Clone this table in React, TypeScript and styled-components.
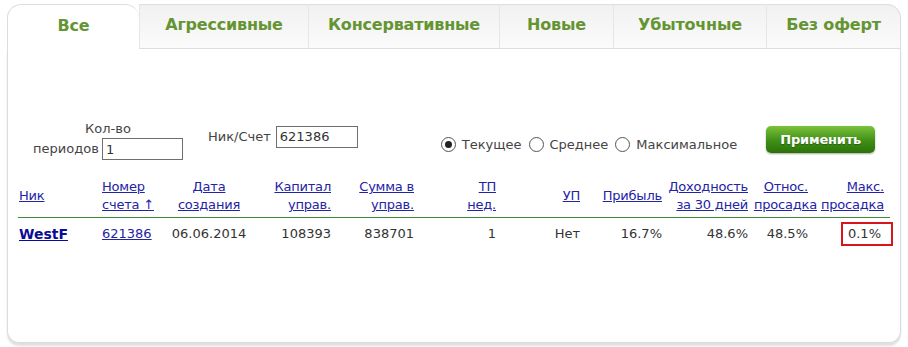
import React from 'react'
import styled, { createGlobalStyle } from 'styled-components'

const GlobalStyle = createGlobalStyle`
  body {
    margin: 0;
    background: #fff;
    font-family: "DejaVu Sans", Verdana, sans-serif;
    font-size: 13px;
    color: #444;
  }
`

const tabs = [
  { title: 'Все', width: 132 },
  { title: 'Агрессивные', width: 169 },
  { title: 'Консервативные', width: 191 },
  { title: 'Новые', width: 114 },
  { title: 'Убыточные', width: 153 },
  { title: 'Без оферт', width: 135 },
]

interface Column {
  key: string,
  title: React.ReactNode,
  width: number,
  align: 'left' | 'center' | 'right'
}

const columns: Column[] = [
  { key: 'nick', title: 'Ник', width: 81, align: 'left' },
  { key: 'account', title: <>Номер<br />счета ↑</>, width: 69, align: 'left' },
  { key: 'created', title: <>Дата<br />создания</>, width: 82, align: 'center' },
  { key: 'capital', title: <>Капитал<br />управ.</>, width: 84, align: 'right' },
  { key: 'sum', title: <>Сумма в<br />управ.</>, width: 83, align: 'right' },
  { key: 'tp', title: <>ТП<br />нед.</>, width: 82, align: 'right' },
  { key: 'up', title: 'УП', width: 84, align: 'right' },
  { key: 'profit', title: 'Прибыль', width: 82, align: 'right' },
  { key: 'yield', title: <>Доходность<br />за 30 дней</>, width: 86, align: 'right' },
  { key: 'rel', title: <>Относ.<br />просадка</>, width: 60, align: 'right' },
  { key: 'max', title: <>Макс.<br />просадка</>, width: 79, align: 'right' },
]

const Page = styled.div`
  padding: 4px 7px 5px 7px;
`

const TabBar = styled.div`
  display: flex;
  height: 45px;
`

const Tab = styled.div<{ $active?: boolean, $last?: boolean }>`
  box-sizing: border-box;
  display: flex;
  align-items: center;
  justify-content: center;
  padding-bottom: 4px;
  font-weight: bold;
  font-size: 16px;
  letter-spacing: -0.2px;
  color: #659433;
  border-top: 1px solid #dedede;
  border-left: 1px solid ${props => props.$active ? '#dcdcdc' : '#e6e6e6'};
  border-right: ${props => props.$last ? '1px solid #dcdcdc' : 'none'};
  border-bottom: ${props => props.$active ? 'none' : '1px solid #dedede'};
  border-radius: ${props => props.$active ? '14px 14px 0 0' : props.$last ? '0 14px 0 0' : '0'};
  background: ${props => props.$active ? '#fff' : 'linear-gradient(#f1f1f1, #fbfbfb)'};
`

const Panel = styled.div`
  height: 294px;
  background: #fff;
  border: 1px solid #dcdcdc;
  border-top: none;
  border-radius: 0 0 12px 12px;
  box-shadow: 0 3px 2px rgba(0, 0, 0, 0.12);
  padding: 71px 0 0 11px;
  box-sizing: border-box;
`

const Filters = styled.div`
  display: flex;
  align-items: center;
  height: 40px;
`

const PeriodField = styled.div`
  width: 150px;
  text-align: center;
  line-height: 18px;
  margin-left: 14px;
`

const TextInput = styled.input<{ $width: number }>`
  width: ${props => props.$width}px;
  height: 22px;
  box-sizing: border-box;
  border: 1px solid #6f6f6f;
  padding: 1px 3px;
  font-family: "DejaVu Sans", Verdana, sans-serif;
  font-size: 13px;
  color: #333;
  vertical-align: middle;
  margin-left: 3px;
`

const NickField = styled.div`
  margin-left: 25px;
  margin-top: -7px;
  display: flex;
  align-items: center;
  & > input { margin-left: 5px; }
`

const RadioGroup = styled.div`
  display: flex;
  align-items: center;
  margin-left: 83px;
  margin-top: 8px;
`

const RadioLabel = styled.label`
  display: flex;
  align-items: center;
  margin-right: 7px;
  color: #444;
`

const Radio = styled.span<{ $checked?: boolean }>`
  width: 15px;
  height: 15px;
  border: 1px solid #555;
  border-radius: 50%;
  box-sizing: border-box;
  margin-right: 6px;
  display: flex;
  align-items: center;
  justify-content: center;
  background: #fff;
  &::after {
    content: '';
    display: ${props => props.$checked ? 'block' : 'none'};
    width: 7px;
    height: 7px;
    border-radius: 50%;
    background: #222;
  }
`

const ApplyButton = styled.button`
  margin-left: 22px;
  margin-top: -2px;
  width: 109px;
  height: 27px;
  border: none;
  border-radius: 5px;
  background: linear-gradient(#7cc23a, #3f8f17 55%, #2c7209);
  box-shadow: 0 1px 2px rgba(0, 0, 0, 0.35);
  color: #fff;
  font-family: "DejaVu Sans", Verdana, sans-serif;
  font-weight: bold;
  font-size: 13px;
  letter-spacing: -0.2px;
  text-shadow: 0 1px 1px rgba(0, 0, 0, 0.3);
`

const Table = styled.table`
  margin-top: 17px;
  margin-left: -1px;
  border-collapse: collapse;
  table-layout: fixed;
  width: 872px;
`

const HeadCell = styled.th<{ $align: string }>`
  font-weight: normal;
  text-align: ${props => props.$align};
  vertical-align: middle;
  line-height: 18px;
  padding: 1px 3px 3px 3px;
  border-bottom: 1px solid #3f8a3a;
  letter-spacing: -0.2px;
  &:first-child { padding-left: 1px; }
  &:last-child { padding-right: 6px; }
`

const HeadLink = styled.a`
  color: #2323a6;
  text-decoration: underline;
`

const Cell = styled.td<{ $align: string }>`
  text-align: ${props => props.$align};
  line-height: 18px;
  padding: 4px 3px;
  color: #333;
  &:first-child { padding-left: 1px; }
  &:last-child { padding-right: 6px; }
`

const NickLink = styled.a`
  color: #0b0b96;
  font-weight: bold;
  font-size: 14px;
  text-decoration: underline;
`

const AccountLink = styled.a`
  color: #2323a6;
  text-decoration: underline;
`

const Highlight = styled.span`
  display: inline-block;
  border: 2px solid #d9141b;
  padding: 1px 10px 1px 5px;
  margin-right: -9px;
`

export default function App () {
  const row: Record<string, React.ReactNode> = {
    nick: <NickLink href="#">WestF</NickLink>,
    account: <AccountLink href="#">621386</AccountLink>,
    created: '06.06.2014',
    capital: '108393',
    sum: '838701',
    tp: '1',
    up: 'Нет',
    profit: '16.7%',
    yield: '48.6%',
    rel: '48.5%',
    max: <Highlight>0.1%</Highlight>,
  }

  return (
    <Page>
      <GlobalStyle />
      <TabBar>
        {tabs.map((tab, index) => (
          <Tab
            key={tab.title}
            style={{ width: tab.width }}
            $active={index === 0}
            $last={index === tabs.length - 1}
          >
            {tab.title}
          </Tab>
        ))}
      </TabBar>
      <Panel>
        <Filters>
          <PeriodField>
            Кол-во<br />периодов<TextInput $width={81} defaultValue="1" />
          </PeriodField>
          <NickField>
            Ник/Счет<TextInput $width={82} defaultValue="621386" />
          </NickField>
          <RadioGroup>
            <RadioLabel><Radio $checked />Текущее</RadioLabel>
            <RadioLabel><Radio />Среднее</RadioLabel>
            <RadioLabel><Radio />Максимальное</RadioLabel>
          </RadioGroup>
          <ApplyButton>Применить</ApplyButton>
        </Filters>
        <Table>
          <colgroup>
            {columns.map(col => <col key={col.key} style={{ width: col.width }} />)}
          </colgroup>
          <thead>
            <tr>
              {columns.map(col => (
                <HeadCell key={col.key} $align={col.align}>
                  <HeadLink href="#">{col.title}</HeadLink>
                </HeadCell>
              ))}
            </tr>
          </thead>
          <tbody>
            <tr>
              {columns.map(col => (
                <Cell key={col.key} $align={col.align}>{row[col.key]}</Cell>
              ))}
            </tr>
          </tbody>
        </Table>
      </Panel>
    </Page>
  )
}
